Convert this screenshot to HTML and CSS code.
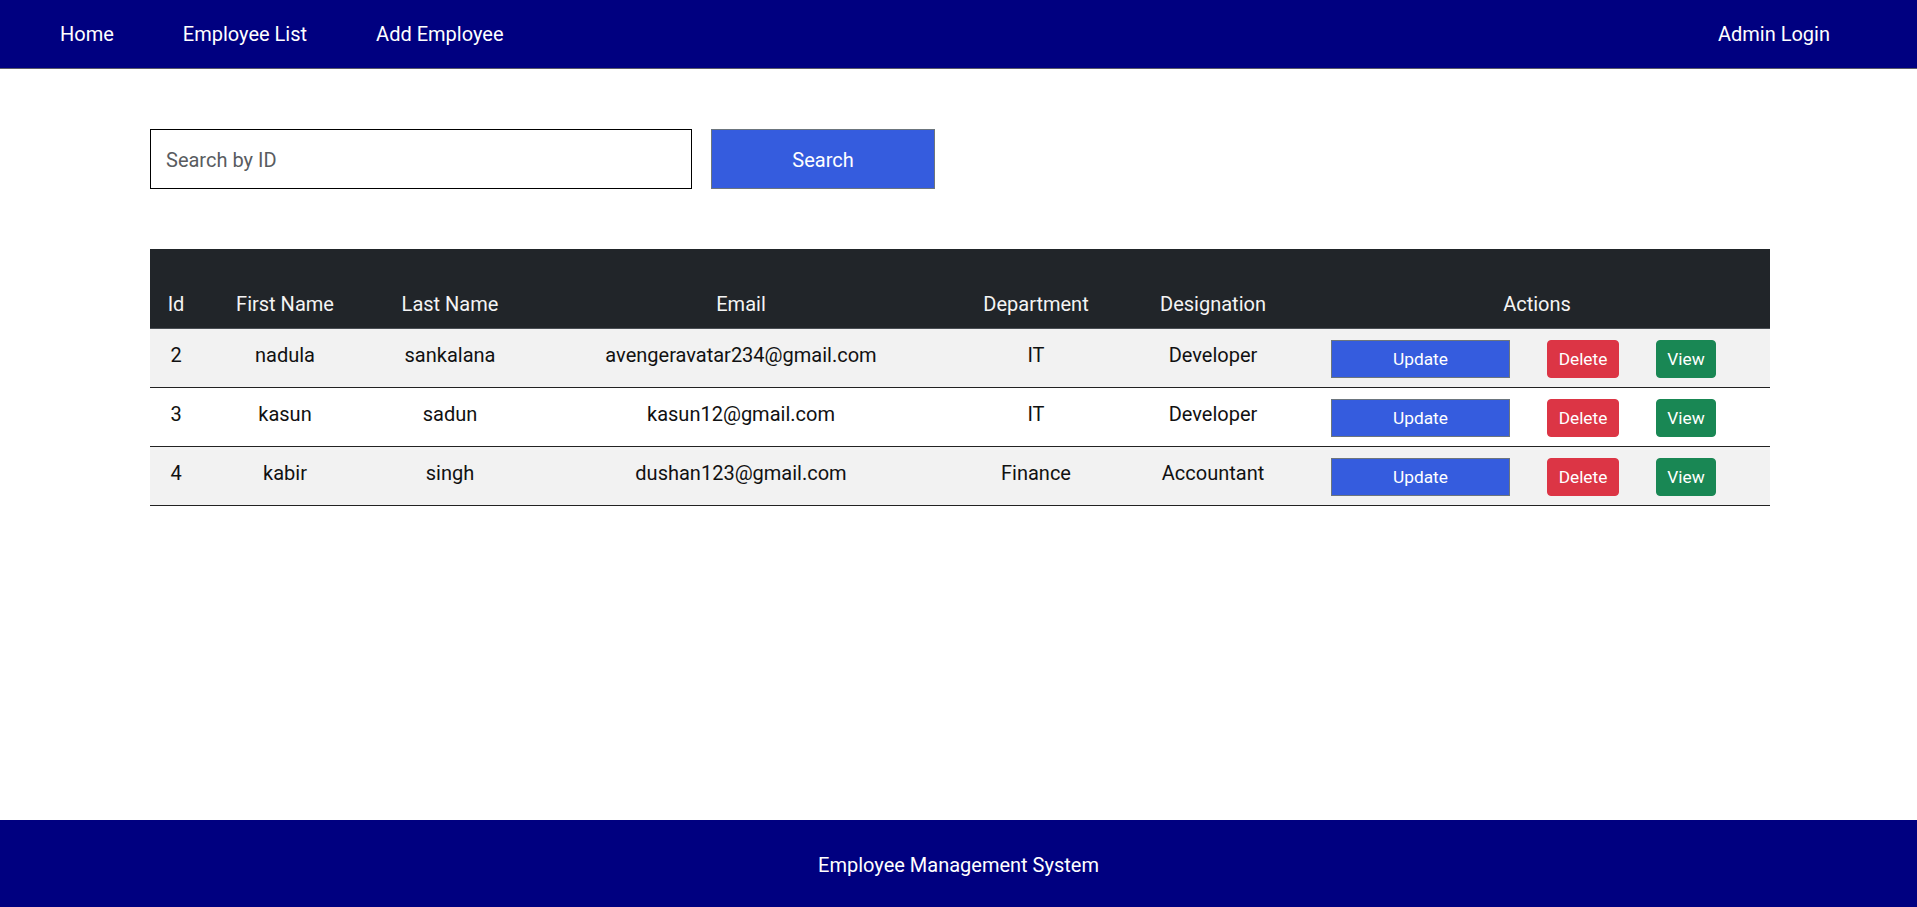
FILE: index.html
```html
<!DOCTYPE html>
<html lang="en">
<head>
<meta charset="utf-8">
<title>Employee Management System</title>
<link rel="stylesheet" href="styles.css">
</head>
<body>
<header class="navbar">
  <nav class="nav-left">
    <a class="nav-link" href="#">Home</a>
    <a class="nav-link" href="#">Employee List</a>
    <a class="nav-link" href="#">Add Employee</a>
  </nav>
  <a class="nav-link nav-right" href="#">Admin Login</a>
</header>
<main class="content">
  <form class="search-row">
    <input class="search-input" type="text" placeholder="Search by ID">
    <button class="search-btn" type="button">Search</button>
  </form>
  <table class="emp-table">
    <colgroup>
      <col class="c-id"><col class="c-first"><col class="c-last"><col class="c-email"><col class="c-dept"><col class="c-desig"><col class="c-actions">
    </colgroup>
    <thead>
      <tr>
        <th>Id</th><th>First Name</th><th>Last Name</th><th>Email</th><th>Department</th><th>Designation</th><th>Actions</th>
      </tr>
    </thead>
    <tbody>
      <tr>
        <td>2</td><td>nadula</td><td>sankalana</td><td>avengeravatar234@gmail.com</td><td>IT</td><td>Developer</td>
        <td class="actions"><div class="action-group"><button class="btn btn-update">Update</button><button class="btn btn-delete">Delete</button><button class="btn btn-view">View</button></div></td>
      </tr>
      <tr>
        <td>3</td><td>kasun</td><td>sadun</td><td>kasun12@gmail.com</td><td>IT</td><td>Developer</td>
        <td class="actions"><div class="action-group"><button class="btn btn-update">Update</button><button class="btn btn-delete">Delete</button><button class="btn btn-view">View</button></div></td>
      </tr>
      <tr>
        <td>4</td><td>kabir</td><td>singh</td><td>dushan123@gmail.com</td><td>Finance</td><td>Accountant</td>
        <td class="actions"><div class="action-group"><button class="btn btn-update">Update</button><button class="btn btn-delete">Delete</button><button class="btn btn-view">View</button></div></td>
      </tr>
    </tbody>
  </table>
</main>
<footer class="footer">Employee Management System</footer>
</body>
</html>
```

FILE: styles.css
```css
* { box-sizing: border-box; }
html, body { margin: 0; padding: 0; }
body {
  font-family: Roboto, "Liberation Sans", sans-serif;
  color: #111;
  background: #fff;
  min-height: 100vh;
  display: flex;
  flex-direction: column;
}
.navbar {
  height: 69px;
  background: #000080;
  border-bottom: 1px solid #5a5a6a;
  display: flex;
  align-items: center;
  padding: 0 87px 0 60px;
}
.nav-left { display: flex; gap: 69px; }
.nav-link {
  color: #fff;
  text-decoration: none;
  font-size: 20px;
  line-height: 24px;
}
.nav-right { margin-left: auto; }
.content {
  flex: 1;
  padding: 60px 147px 0 150px;
}
.search-row {
  display: flex;
  gap: 19px;
  margin: 0 0 60px 0;
}
.search-input {
  width: 542px;
  height: 60px;
  border: 1px solid #000;
  padding: 2px 15px 0;
  font-family: Roboto, "Liberation Sans", sans-serif;
  font-size: 20px;
  color: #111;
  outline: none;
}
.search-input::placeholder { color: #595c5f; }
.search-btn {
  width: 224px;
  height: 60px;
  background: #355cde;
  border: 1px solid #6c757d;
  color: #fff;
  font-family: Roboto, "Liberation Sans", sans-serif;
  font-size: 20px;
  padding-top: 2px;
}
.emp-table {
  width: 1620px;
  border-collapse: collapse;
  table-layout: fixed;
}
.c-id { width: 52px; }
.c-first { width: 166px; }
.c-last { width: 164px; }
.c-email { width: 418px; }
.c-dept { width: 172px; }
.c-desig { width: 182px; }
.c-actions { width: 466px; }
.emp-table th {
  background: #212529;
  color: #f4f4f4;
  font-weight: 400;
  font-size: 20px;
  line-height: 23px;
  padding: 44px 0 12px;
  border-bottom: 1px solid #4a4f54;
  text-align: center;
}
.emp-table td {
  font-size: 20px;
  line-height: 23px;
  text-align: center;
  vertical-align: top;
  padding: 15px 0 0;
  border-bottom: 1px solid #222;
  height: 59px;
}
.emp-table td.actions { padding-top: 11px; }
.emp-table tbody tr:nth-child(odd) td { background: #f2f2f2; }
.emp-table tbody tr:nth-child(even) td { background: #fff; }
.action-group {
  display: flex;
  gap: 37px;
  padding-left: 27px;
}
.btn {
  height: 38px;
  font-family: Roboto, "Liberation Sans", sans-serif;
  font-size: 17.3px;
  line-height: 24px;
  color: #fff;
  padding: 0;
  text-align: center;
  border: 1px solid transparent;
  border-radius: 4px;
}
.btn-update {
  width: 179px;
  background: #355cde;
  border-color: #6c757d;
  border-radius: 0;
}
.btn-delete { width: 72px; background: #dc3545; border-color: #dc3545; }
.btn-view { width: 60px; background: #198754; border-color: #198754; }
.footer {
  height: 87px;
  background: #000080;
  color: #fff;
  font-size: 20px;
  padding-top: 2px;
  display: flex;
  align-items: center;
  justify-content: center;
}
```
